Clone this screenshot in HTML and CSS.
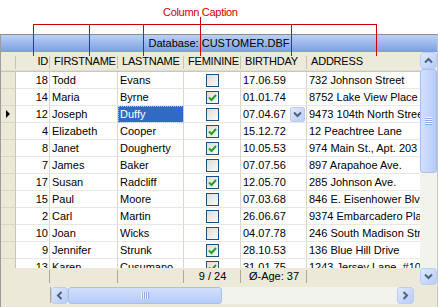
FILE: index.html
```html
<!DOCTYPE html>
<html lang="en">
  <head>
    <meta charset="UTF-8" />
    <title>DBGrid - Column Caption</title>
    <link rel="stylesheet" href="styles.css">
  </head>
  <body>
    <div class="page">
      <div class="caption">Column Caption</div>

      <!-- callout lines pointing at the column captions -->
      <svg class="callout-lines" width="438" height="60" viewBox="0 0 438 60">
        <path
          d="M33.5 24.5H376.5 M33.5 24v32 M89.5 24v32 M143.5 24v32 M200.5 17v39 M291.5 24v32 M376.5 24v32"
          stroke="#cc0000"
          stroke-width="1"
          fill="none"
        ></path>
      </svg>

      <div class="dbgrid">
        <div class="dbgrid-title">Database: CUSTOMER.DBF</div>

        <div class="dbgrid-main">
          <div class="dbgrid-view">
            <div class="grid-head">
              <div class="hcell"></div>
              <div class="hcell num">ID</div>
              <div class="hcell">FIRSTNAME</div>
              <div class="hcell">LASTNAME</div>
              <div class="hcell">FEMININE</div>
              <div class="hcell">BIRTHDAY</div>
              <div class="hcell last">ADDRESS</div>
            </div>

            <div class="grid-rows">
              <div class="grid-row">
                <div class="cell ind"></div>
                <div class="cell num">18</div>
                <div class="cell">Todd</div>
                <div class="cell">Evans</div>
                <div class="cell check"><span class="checkbox"></span></div>
                <div class="cell">17.06.59</div>
                <div class="cell last">732 Johnson Street</div>
              </div>
              <div class="grid-row">
                <div class="cell ind"></div>
                <div class="cell num">14</div>
                <div class="cell">Maria</div>
                <div class="cell">Byrne</div>
                <div class="cell check">
                  <span class="checkbox">
                    <svg width="9" height="9" viewBox="0 0 9 9"><path d="M1 4.5l2.5 2.5L8 2" stroke="#21a121" stroke-width="2" fill="none"></path></svg>
                  </span>
                </div>
                <div class="cell">01.01.74</div>
                <div class="cell last">8752 Lake View Place</div>
              </div>
              <div class="grid-row current">
                <div class="cell ind"><span class="row-pointer"></span></div>
                <div class="cell num">12</div>
                <div class="cell">Joseph</div>
                <div class="cell selected">Duffy</div>
                <div class="cell check"><span class="checkbox"></span></div>
                <div class="cell combo">
                  07.04.67
                  <span class="combo-btn">
                    <svg width="9" height="7" viewBox="0 0 9 7"><path d="M1 1.5l3.5 3.5L8 1.5" stroke="#4d6185" stroke-width="2" fill="none"></path></svg>
                  </span>
                </div>
                <div class="cell last">9473 104th North Street</div>
              </div>
              <div class="grid-row">
                <div class="cell ind"></div>
                <div class="cell num">4</div>
                <div class="cell">Elizabeth</div>
                <div class="cell">Cooper</div>
                <div class="cell check">
                  <span class="checkbox">
                    <svg width="9" height="9" viewBox="0 0 9 9"><path d="M1 4.5l2.5 2.5L8 2" stroke="#21a121" stroke-width="2" fill="none"></path></svg>
                  </span>
                </div>
                <div class="cell">15.12.72</div>
                <div class="cell last">12 Peachtree Lane</div>
              </div>
              <div class="grid-row">
                <div class="cell ind"></div>
                <div class="cell num">8</div>
                <div class="cell">Janet</div>
                <div class="cell">Dougherty</div>
                <div class="cell check">
                  <span class="checkbox">
                    <svg width="9" height="9" viewBox="0 0 9 9"><path d="M1 4.5l2.5 2.5L8 2" stroke="#21a121" stroke-width="2" fill="none"></path></svg>
                  </span>
                </div>
                <div class="cell">10.05.53</div>
                <div class="cell last">974 Main St., Apt. 203</div>
              </div>
              <div class="grid-row">
                <div class="cell ind"></div>
                <div class="cell num">7</div>
                <div class="cell">James</div>
                <div class="cell">Baker</div>
                <div class="cell check"><span class="checkbox"></span></div>
                <div class="cell">07.07.56</div>
                <div class="cell last">897 Arapahoe Ave.</div>
              </div>
              <div class="grid-row">
                <div class="cell ind"></div>
                <div class="cell num">17</div>
                <div class="cell">Susan</div>
                <div class="cell">Radcliff</div>
                <div class="cell check">
                  <span class="checkbox">
                    <svg width="9" height="9" viewBox="0 0 9 9"><path d="M1 4.5l2.5 2.5L8 2" stroke="#21a121" stroke-width="2" fill="none"></path></svg>
                  </span>
                </div>
                <div class="cell">12.05.70</div>
                <div class="cell last">285 Johnson Ave.</div>
              </div>
              <div class="grid-row">
                <div class="cell ind"></div>
                <div class="cell num">15</div>
                <div class="cell">Paul</div>
                <div class="cell">Moore</div>
                <div class="cell check"><span class="checkbox"></span></div>
                <div class="cell">07.03.68</div>
                <div class="cell last">846 E. Eisenhower Blvd</div>
              </div>
              <div class="grid-row">
                <div class="cell ind"></div>
                <div class="cell num">2</div>
                <div class="cell">Carl</div>
                <div class="cell">Martin</div>
                <div class="cell check"><span class="checkbox"></span></div>
                <div class="cell">26.06.67</div>
                <div class="cell last">9374 Embarcadero Place</div>
              </div>
              <div class="grid-row">
                <div class="cell ind"></div>
                <div class="cell num">10</div>
                <div class="cell">Joan</div>
                <div class="cell">Wicks</div>
                <div class="cell check"><span class="checkbox"></span></div>
                <div class="cell">04.07.78</div>
                <div class="cell last">246 South Madison Street</div>
              </div>
              <div class="grid-row">
                <div class="cell ind"></div>
                <div class="cell num">9</div>
                <div class="cell">Jennifer</div>
                <div class="cell">Strunk</div>
                <div class="cell check">
                  <span class="checkbox">
                    <svg width="9" height="9" viewBox="0 0 9 9"><path d="M1 4.5l2.5 2.5L8 2" stroke="#21a121" stroke-width="2" fill="none"></path></svg>
                  </span>
                </div>
                <div class="cell">28.10.53</div>
                <div class="cell last">136 Blue Hill Drive</div>
              </div>
              <div class="grid-row">
                <div class="cell ind"></div>
                <div class="cell num">13</div>
                <div class="cell">Karen</div>
                <div class="cell">Cusumano</div>
                <div class="cell check">
                  <span class="checkbox">
                    <svg width="9" height="9" viewBox="0 0 9 9"><path d="M1 4.5l2.5 2.5L8 2" stroke="#21a121" stroke-width="2" fill="none"></path></svg>
                  </span>
                </div>
                <div class="cell">31.01.75</div>
                <div class="cell last">1243 Jersey Lane, #10</div>
              </div>
            </div>

            <div class="grid-status">
              <div class="scell wide"></div>
              <div class="scell"></div>
              <div class="scell"></div>
              <div class="scell">9 / 24</div>
              <div class="scell">Ø-Age: 37</div>
              <div class="scell last"></div>
            </div>
          </div>

          <div class="vscroll">
            <span class="sb-btn">
              <svg width="9" height="7" viewBox="0 0 9 7"><path d="M1 5.5l3.5-3.5L8 5.5" stroke="#4d6185" stroke-width="2" fill="none"></path></svg>
            </span>
            <span class="sb-thumb"><span class="grip"></span></span>
            <span class="sb-track"></span>
            <span class="sb-btn">
              <svg width="9" height="7" viewBox="0 0 9 7"><path d="M1 1.5l3.5 3.5L8 1.5" stroke="#4d6185" stroke-width="2" fill="none"></path></svg>
            </span>
          </div>
        </div>

        <div class="dbgrid-bottom">
          <div class="fixed-spacer"></div>
          <div class="hscroll">
            <span class="sb-btn">
              <svg width="7" height="9" viewBox="0 0 7 9"><path d="M5.5 1L2 4.5L5.5 8" stroke="#4d6185" stroke-width="2" fill="none"></path></svg>
            </span>
            <span class="sb-thumb"><span class="grip"></span></span>
            <span class="sb-track"></span>
            <span class="sb-btn">
              <svg width="7" height="9" viewBox="0 0 7 9"><path d="M1.5 1L5 4.5L1.5 8" stroke="#4d6185" stroke-width="2" fill="none"></path></svg>
            </span>
          </div>
          <div class="corner"></div>
        </div>
      </div>
    </div>
  </body>
</html>
```

FILE: styles.css
```css
* {
  box-sizing: border-box;
  margin: 0;
  padding: 0;
}

body {
  background: #fff;
  font-family: "Liberation Sans", Arial, sans-serif;
  font-size: 11px;
  color: #000;
}

.page {
  position: relative;
  width: 438px;
  height: 307px;
  overflow: hidden;
}

.caption {
  height: 34px;
  padding: 6px 0 0 163px;
  line-height: 13px;
  color: #d00000;
  letter-spacing: -0.3px;
}

.callout-lines {
  position: absolute;
  left: 0;
  top: 0;
  pointer-events: none;
  z-index: 2;
}

/* grid control */
.dbgrid {
  height: 273px;
  display: flex;
  flex-direction: column;
  background: #ece9d8;
  border-top: 1px solid #8c8c8c;
  border-left: 1px solid #9c9c9c;
  border-right: 1px solid #c9c7ba;
}

.dbgrid-title {
  height: 17px;
  line-height: 17px;
  text-align: center;
  background: linear-gradient(#bbd0f5, #7b9ee1);
}

.dbgrid-main {
  display: flex;
  height: 233px;
}

.dbgrid-view {
  width: 419px;
  display: flex;
  flex-direction: column;
}

.grid-head,
.grid-row,
.grid-status {
  display: grid;
  grid-template-columns: 15px 34px 68px 66px 57px 66px 113px;
}

.grid-head {
  height: 20px;
  background: #ebeadb;
  box-shadow: inset 0 -1px #cbc7b8, inset 0 -2px #e2decd;
}

.hcell {
  padding: 0 4px;
  line-height: 19px;
  letter-spacing: -0.2px;
  white-space: nowrap;
  overflow: hidden;
  background-image: linear-gradient(#c7c5b2, #c7c5b2);
  background-size: 1px 13px;
  background-position: right 4px;
  background-repeat: no-repeat;
}

.hcell.num {
  text-align: right;
  padding-right: 2px;
}

.hcell.last {
  background: none;
}

.grid-rows {
  height: 196px;
  overflow: hidden;
  background: #fff;
}

.grid-row {
  height: 17px;
}

.cell {
  padding: 0 2px;
  line-height: 16px;
  white-space: nowrap;
  overflow: hidden;
  border-right: 1px solid #dad8cd;
  border-bottom: 1px solid #e8e7e0;
}

.cell.last {
  border-right: none;
}

.cell.num {
  text-align: right;
  padding-right: 1px;
}

.cell.ind {
  display: flex;
  align-items: center;
  padding-left: 5px;
  background: #ece9d8;
  border-right: 1px solid #c8c5b5;
  border-bottom: 1px solid #d9d6c6;
}

.row-pointer {
  width: 0;
  height: 0;
  border-left: 4px solid #000;
  border-top: 4px solid transparent;
  border-bottom: 4px solid transparent;
}

.cell.selected {
  background: #316ac5;
  color: #fff;
  outline: 1px dotted #a9c0ea;
  outline-offset: -1px;
}

.cell.check {
  display: flex;
  align-items: center;
  justify-content: center;
}

.checkbox {
  width: 13px;
  height: 13px;
  display: flex;
  align-items: center;
  justify-content: center;
  border: 1px solid #1c5180;
  background: linear-gradient(135deg, #dcdcd7, #fbfbf9);
}

.cell.combo {
  display: flex;
  align-items: center;
  padding-right: 1px;
}

.combo-btn {
  margin-left: auto;
  width: 15px;
  height: 15px;
  display: flex;
  align-items: center;
  justify-content: center;
  border: 1px solid #b8cbf3;
  border-radius: 2px;
  background: linear-gradient(135deg, #e2ebfe, #b9cdf8);
}

.grid-status {
  height: 17px;
  background: #ece9d8;
}

.scell {
  line-height: 17px;
  text-align: center;
  white-space: nowrap;
  background-image: linear-gradient(#aca899, #aca899);
  background-size: 1px 13px;
  background-position: right 2px;
  background-repeat: no-repeat;
}

.scell.wide {
  grid-column: span 2;
}

.scell.last {
  background: none;
}

/* scrollbars */
.vscroll {
  width: 17px;
  display: flex;
  flex-direction: column;
  background: #f3f3ee;
}

.sb-btn {
  flex: none;
  width: 17px;
  height: 17px;
  display: flex;
  align-items: center;
  justify-content: center;
  border: 1px solid #bccdf3;
  border-radius: 3px;
  background: linear-gradient(135deg, #e0eafe, #b7cbf7);
}

.sb-thumb {
  flex: none;
  display: flex;
  align-items: center;
  justify-content: center;
  border: 1px solid #a9bff0;
  border-radius: 3px;
}

.vscroll .sb-thumb {
  height: 104px;
  background: linear-gradient(90deg, #d3e0fc, #b6cbf8);
}

.vscroll .grip {
  width: 7px;
  height: 8px;
  background: repeating-linear-gradient(#f0f5ff 0 1px, #8eabe6 1px 2px);
}

.sb-track {
  flex: 1;
}

.dbgrid-bottom {
  display: flex;
  height: 21px;
  padding-top: 2px;
}

.fixed-spacer {
  width: 50px;
  background-image: linear-gradient(#aca899, #aca899);
  background-size: 1px 16px;
  background-position: right top;
  background-repeat: no-repeat;
}

.hscroll {
  width: 363px;
  height: 17px;
  display: flex;
  background: #f3f3ee;
}

.hscroll .sb-thumb {
  width: 154px;
  background: linear-gradient(#d3e0fc, #b6cbf8);
}

.hscroll .grip {
  width: 8px;
  height: 7px;
  background: repeating-linear-gradient(90deg, #f0f5ff 0 1px, #8eabe6 1px 2px);
}

.corner {
  flex: 1;
}
```
